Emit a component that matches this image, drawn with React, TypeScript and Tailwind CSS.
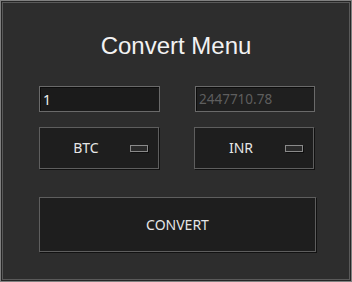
const UI_FONT = "font-['Noto_Sans','Open_Sans',sans-serif]";

function Indicator() {
  return (
    <span className="mr-[10px] block h-[7px] w-[18px] border border-[#8a8a8a] bg-[#2a2a2a] shadow-[1px_1px_0_#0e0e0e]" />
  );
}

function OptionButton({ label }: { label: string }) {
  return (
    <div className="flex h-[42px] w-[120px] items-center border border-[#5e5e5e] bg-[#1e1e1e] shadow-[1px_1px_0_#111]">
      <span className={`flex-1 pl-[2px] text-center text-[14px] leading-none text-[#e6e6e6] ${UI_FONT}`}>{label}</span>
      <Indicator />
    </div>
  );
}

export default function App() {
  return (
    <div className="h-[282px] w-[352px] border border-[#808080] bg-[#262626] p-px">
      <div className="flex h-full flex-col border border-[#595959] bg-[#2d2d2d]">
        <h1 className="pt-[29px] text-center font-['Liberation_Sans',Arial,sans-serif] text-[24px] leading-[28px] text-[#f2f2f2]">
          Convert Menu
        </h1>

        <div className={`mt-[26px] flex pl-[36px] ${UI_FONT}`}>
          <div className="flex h-[26px] w-[121px] items-center border border-[#6a6a6a] bg-[#1b1b1b] pl-[3px] text-[14px] text-[#f0f0f0] shadow-[inset_1px_1px_0_#0c0c0c]">
            1
          </div>
          <div className="ml-[35px] flex h-[26px] w-[120px] items-center border border-[#6a6a6a] bg-[#1f1f1f] pl-[3px] text-[13.5px] text-[#5e5e5e] shadow-[inset_1px_1px_0_#0c0c0c]">
            2447710.78
          </div>
        </div>

        <div className="mt-[15px] flex gap-[35px] pl-[36px]">
          <OptionButton label="BTC" />
          <OptionButton label="INR" />
        </div>

        <div className="mt-[28px] pl-[36px]">
          <button
            className={`flex h-[55px] w-[277px] items-center justify-center border border-[#5e5e5e] bg-[#1e1e1e] text-[14px] text-[#e6e6e6] shadow-[1px_1px_0_#111] ${UI_FONT}`}
          >
            CONVERT
          </button>
        </div>
      </div>
    </div>
  );
}
